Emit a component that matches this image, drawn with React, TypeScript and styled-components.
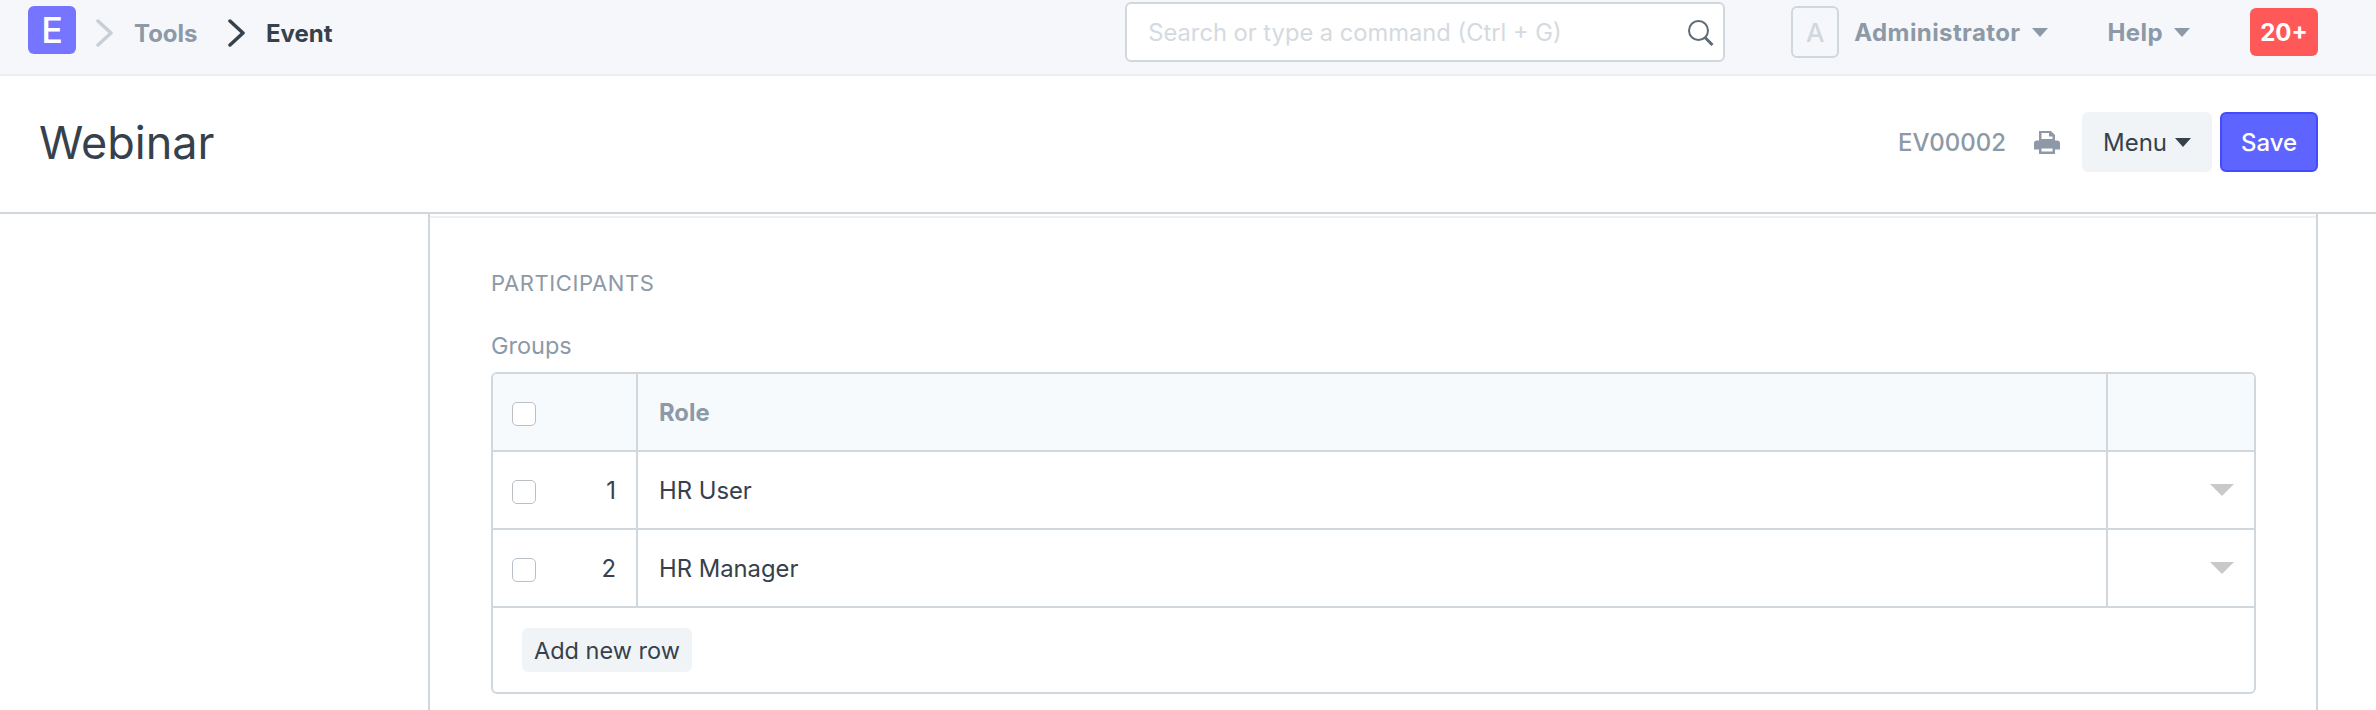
import * as React from "react";
import styled, { createGlobalStyle } from "styled-components";

const BORD = "#d1d8dd";
const PALE = "#8d99a6";
const TEXTE = "#36414c";

const Global = createGlobalStyle`
  html, body { margin: 0; padding: 0; background: #fff; }
  body { font-family: Inter, "Liberation Sans", sans-serif; color: ${TEXTE}; overflow: hidden; }
  * { box-sizing: border-box; }
`;

const Page = styled.div`
  width: 2376px;
  height: 710px;
  overflow: hidden;
  background: #fff;
`;

const Navbar = styled.nav`
  height: 76px;
  background: #f5f7fa;
  border-bottom: 2px solid #ebeef2;
  display: flex;
  align-items: flex-start;
  padding: 0 58px 0 28px;
`;

const Logo = styled.div`
  width: 48px;
  height: 48px;
  margin: 6px 20px 0 0;
  border-radius: 6px;
  background: #7575ff;
  color: #fff;
  font-size: 36px;
  font-weight: 500;
  display: flex;
  align-items: center;
  justify-content: center;
`;

const Crumb = styled.div<{ $actif?: boolean; $largeur: number }>`
  height: 66px;
  width: ${(p) => p.$largeur}px;
  display: flex;
  align-items: center;
  font-size: 24px;
  font-weight: 700;
  color: ${(p) => (p.$actif ? TEXTE : PALE)};
  svg { margin-right: 21px; flex: none; }
`;

const Search = styled.div`
  margin-left: auto;
  width: 600px;
  height: 60px;
  margin-top: 2px;
  background: #fff;
  border: 2px solid ${BORD};
  border-radius: 6px;
  display: flex;
  align-items: center;
  justify-content: space-between;
  padding: 0 9px 0 21px;
  font-size: 23.7px;
  color: #d4dae0;
`;

const Avatar = styled.div`
  width: 48px;
  height: 52px;
  margin: 6px 15px 0 66px;
  border: 2px solid ${BORD};
  border-radius: 6px;
  color: #d1d8dd;
  font-size: 26px;
  font-weight: 500;
  display: flex;
  align-items: center;
  justify-content: center;
`;

const NavLink = styled.div`
  height: 64px;
  margin-right: 60px;
  display: flex;
  align-items: center;
  gap: 11px;
  font-size: 24px;
  font-weight: 700;
  letter-spacing: 0.4px;
  color: ${PALE};
  white-space: nowrap;
`;

const Caret = styled.span<{ $couleur: string }>`
  width: 0;
  height: 0;
  border-left: 8px solid transparent;
  border-right: 8px solid transparent;
  border-top: 9px solid ${(p) => p.$couleur};
`;

const Badge = styled.div`
  width: 68px;
  height: 48px;
  margin-top: 8px;
  border-radius: 6px;
  background: #ff5858;
  color: #fff;
  font-size: 24px;
  font-weight: 700;
  display: flex;
  align-items: center;
  justify-content: center;
`;

const PageHead = styled.header`
  height: 138px;
  border-bottom: 2px solid ${BORD};
  display: flex;
  align-items: center;
  padding: 0 58px 4px 39px;
`;

const Title = styled.h1`
  margin: 0 auto 0 0;
  font-size: 45px;
  font-weight: 400;
  color: ${TEXTE};
`;

const DocName = styled.span`
  font-size: 24px;
  font-weight: 500;
  color: ${PALE};
  margin-right: 28px;
`;

const Bouton = styled.div<{ $primaire?: boolean; $largeur: number }>`
  width: ${(p) => p.$largeur}px;
  height: 60px;
  border-radius: 6px;
  display: flex;
  align-items: center;
  justify-content: center;
  gap: 8px;
  font-size: 24px;
  font-weight: ${(p) => (p.$primaire ? 500 : 400)};
  color: ${(p) => (p.$primaire ? "#fff" : TEXTE)};
  background: ${(p) => (p.$primaire ? "#5e64ff" : "#f0f4f7")};
  border: 2px solid ${(p) => (p.$primaire ? "#444bff" : "#f0f4f7")};
`;

const PrintIcon = styled.svg`
  margin-right: 22px;
  fill: ${PALE};
`;

const Actions = styled.div`
  display: flex;
  gap: 8px;
`;

const Card = styled.section`
  margin: 0 58px 0 428px;
  height: 496px;
  border-left: 2px solid ${BORD};
  border-right: 2px solid ${BORD};
  padding-top: 2px;
`;

const CardBody = styled.div`
  border-top: 2px solid #eef1f4;
  padding: 51px 60px 0 61px;
`;

const SectionHead = styled.h2`
  margin: 0 0 35px;
  font-size: 22px;
  line-height: 28px;
  font-weight: 400;
  letter-spacing: 0.6px;
  color: ${PALE};
`;

const Label = styled.div`
  font-size: 23.5px;
  line-height: 28px;
  color: ${PALE};
  margin-bottom: 12px;
`;

const Grille = styled.div`
  border: 2px solid ${BORD};
  border-radius: 6px;
  height: 322px;
  overflow: hidden;
`;

const Ligne = styled.div<{ $entete?: boolean }>`
  display: grid;
  grid-template-columns: 145px 1470px 1fr;
  height: 78px;
  border-bottom: 2px solid ${BORD};
  background: ${(p) => (p.$entete ? "#f7fafc" : "#fff")};
  align-items: stretch;
`;

const Cellule = styled.div<{ $gauche: number }>`
  display: flex;
  align-items: center;
  padding: 0 20px 0 ${(p) => p.$gauche}px;
  border-right: 2px solid ${BORD};
  font-size: 23.8px;
  &:last-child { border-right: 0; justify-content: flex-end; }
`;

const Case = styled.span`
  width: 24px;
  height: 24px;
  border: 1.5px solid #b8bfc6;
  border-radius: 5px;
  background: #fff;
  margin-right: auto;
  margin-top: 4px;
`;

const EnteteRole = styled.span`
  font-weight: 700;
  color: ${PALE};
`;

const Triangle = styled.span`
  width: 0;
  height: 0;
  border-left: 12px solid transparent;
  border-right: 12px solid transparent;
  border-top: 12px solid #c9c9c9;
`;

const PiedGrille = styled.div`
  padding: 20px 0 0 29px;
`;

const BoutonAjout = styled.div`
  display: inline-flex;
  align-items: center;
  justify-content: center;
  width: 170px;
  height: 44px;
  border-radius: 6px;
  background: #f0f4f7;
  font-size: 23.5px;
  color: ${TEXTE};
`;

const Chevron = ({ couleur }: { couleur: string }) => (
  <svg width="17" height="28" viewBox="0 0 17 28" fill="none">
    <path d="M2 2l13 12L2 26" stroke={couleur} strokeWidth="3.5" strokeLinecap="round" strokeLinejoin="round" />
  </svg>
);

const lignes = [
  { n: 1, role: "HR User" },
  { n: 2, role: "HR Manager" },
];

export default function App() {
  return (
    <Page>
      <Global />
      <Navbar>
        <Logo>E</Logo>
        <Crumb $largeur={132}>
          <Chevron couleur="#c8cfd6" />
          Tools
        </Crumb>
        <Crumb $largeur={120} $actif>
          <Chevron couleur={TEXTE} />
          Event
        </Crumb>
        <Search>
          Search or type a command (Ctrl + G)
          <svg width="27" height="27" viewBox="0 0 27 27" fill="none">
            <circle cx="11.5" cy="11.5" r="9.5" stroke="#5f6b76" strokeWidth="2" />
            <path d="M18 18.5l7.5 7.5" stroke="#5f6b76" strokeWidth="3" />
          </svg>
        </Search>
        <Avatar>A</Avatar>
        <NavLink>
          Administrator <Caret $couleur={PALE} />
        </NavLink>
        <NavLink>
          Help <Caret $couleur={PALE} />
        </NavLink>
        <Badge>20+</Badge>
      </Navbar>
      <PageHead>
        <Title>Webinar</Title>
        <DocName>EV00002</DocName>
        <PrintIcon width="26" height="24" viewBox="0 0 26 24">
          <path d="M5 1h12l4 4v6H5zM7.5 3v6h11V6.500h-3.500V3z" />
          <path d="M3 10.500h20a3 3 0 0 1 3 3v6h-5V24H5v-4.500H0v-6a3 3 0 0 1 3-3zm4.500 8v3h11v-3z" />
        </PrintIcon>
        <Actions>
          <Bouton $largeur={130}>
            Menu <Caret $couleur={TEXTE} />
          </Bouton>
          <Bouton $largeur={98} $primaire>
            Save
          </Bouton>
        </Actions>
      </PageHead>
      <Card>
        <CardBody>
          <SectionHead>PARTICIPANTS</SectionHead>
          <Label>Groups</Label>
          <Grille>
            <Ligne $entete>
              <Cellule $gauche={19}>
                <Case />
              </Cellule>
              <Cellule $gauche={21}>
                <EnteteRole>Role</EnteteRole>
              </Cellule>
              <Cellule $gauche={20} />
            </Ligne>
            {lignes.map((l) => (
              <Ligne key={l.n}>
                <Cellule $gauche={19}>
                  <Case />
                  {l.n}
                </Cellule>
                <Cellule $gauche={21}>{l.role}</Cellule>
                <Cellule $gauche={20}>
                  <Triangle />
                </Cellule>
              </Ligne>
            ))}
            <PiedGrille>
              <BoutonAjout>Add new row</BoutonAjout>
            </PiedGrille>
          </Grille>
        </CardBody>
      </Card>
    </Page>
  );
}
